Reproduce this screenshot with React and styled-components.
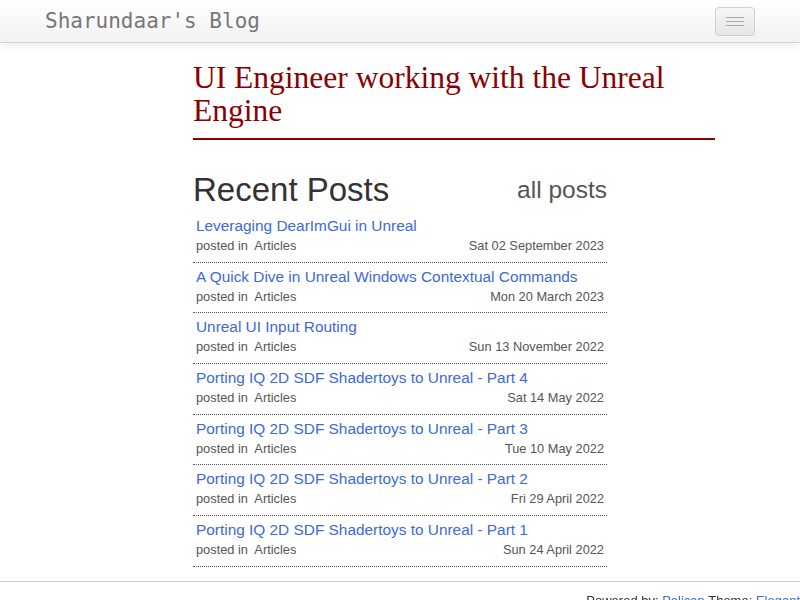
import React from "react";
import styled, { createGlobalStyle } from "styled-components";

const Global = createGlobalStyle`
  html, body {
    margin: 0;
    padding: 0;
    background: #fff;
    font-family: "Liberation Sans", Arial, sans-serif;
    overflow: hidden;
  }
`;

const Navbar = styled.header`
  height: 42px;
  background: linear-gradient(#ffffff, #f2f2f2);
  border-bottom: 1px solid #d4d4d4;
  box-shadow: 0 1px 10px rgba(0, 0, 0, 0.1);
  display: flex;
  align-items: center;
  justify-content: space-between;
  padding: 0 45px;
`;

const Brand = styled.a`
  font-family: "DejaVu Sans Mono", monospace;
  font-size: 21px;
  color: #777;
  text-decoration: none;
`;

const Toggle = styled.button`
  width: 40px;
  height: 29px;
  border: 1px solid #d0d0d0;
  border-radius: 4px;
  background: linear-gradient(#f6f6f6, #e6e6e6);
  display: flex;
  flex-direction: column;
  align-items: center;
  justify-content: center;
  gap: 3px;
  padding: 0;
`;

const Bar = styled.span`
  display: block;
  width: 18px;
  height: 1px;
  background: #a8a8a8;
`;

const Main = styled.main`
  width: 522px;
  margin: 18px 0 0 193px;
`;

const Tagline = styled.h1`
  margin: 0;
  font-family: "Liberation Serif", "Times New Roman", serif;
  font-weight: normal;
  font-size: 31.5px;
  line-height: 33px;
  color: #8b0000;
  padding-bottom: 11px;
  border-bottom: 2px solid #8b0000;
`;

const Recent = styled.section`
  width: 414px;
  margin-top: 31px;
`;

const HeadRow = styled.div`
  display: flex;
  align-items: center;
  justify-content: space-between;
  margin-bottom: 3px;
`;

const Heading = styled.h2`
  margin: 0;
  font-weight: normal;
  font-size: 33px;
  line-height: 38px;
  color: #333;
`;

const AllPosts = styled.a`
  font-size: 24.5px;
  color: #555;
  text-decoration: none;
`;

const Entry = styled.div`
  padding: 4px 3px 5.7px;
  border-bottom: 1px dotted #555;
`;

const PostLink = styled.a`
  display: block;
  font-size: 15.4px;
  line-height: 20px;
  color: #3d6ad6;
  text-decoration: none;
`;

const Meta = styled.div`
  display: flex;
  justify-content: space-between;
  font-size: 12.8px;
  line-height: 20px;
  color: #555;
`;

const Footer = styled.footer`
  position: fixed;
  left: 0;
  right: 0;
  top: 581px;
  border-top: 1px solid #ccc;
  text-align: right;
  font-size: 13px;
  color: #333;
  padding: 11px 0 0;
  white-space: nowrap;
`;

const FootLink = styled.a`
  color: #3d6ad6;
  text-decoration: none;
`;

const posts = [
  ["Leveraging DearImGui in Unreal", "Sat 02 September 2023"],
  ["A Quick Dive in Unreal Windows Contextual Commands", "Mon 20 March 2023"],
  ["Unreal UI Input Routing", "Sun 13 November 2022"],
  ["Porting IQ 2D SDF Shadertoys to Unreal - Part 4", "Sat 14 May 2022"],
  ["Porting IQ 2D SDF Shadertoys to Unreal - Part 3", "Tue 10 May 2022"],
  ["Porting IQ 2D SDF Shadertoys to Unreal - Part 2", "Fri 29 April 2022"],
  ["Porting IQ 2D SDF Shadertoys to Unreal - Part 1", "Sun 24 April 2022"],
];

export default function App() {
  return (
    <>
      <Global />
      <Navbar>
        <Brand href="#">Sharundaar's Blog</Brand>
        <Toggle aria-label="menu">
          <Bar />
          <Bar />
          <Bar />
        </Toggle>
      </Navbar>
      <Main>
        <Tagline>UI Engineer working with the Unreal Engine</Tagline>
        <Recent>
          <HeadRow>
            <Heading>Recent Posts</Heading>
            <AllPosts href="#">all posts</AllPosts>
          </HeadRow>
          {posts.map(([title, date]) => (
            <Entry key={title}>
              <PostLink href="#">{title}</PostLink>
              <Meta>
                <span>posted in&nbsp; Articles</span>
                <span>{date}</span>
              </Meta>
            </Entry>
          ))}
        </Recent>
      </Main>
      <Footer>
        Powered by: <FootLink href="#">Pelican</FootLink> Theme:{" "}
        <FootLink href="#">Elegant</FootLink>
      </Footer>
    </>
  );
}
